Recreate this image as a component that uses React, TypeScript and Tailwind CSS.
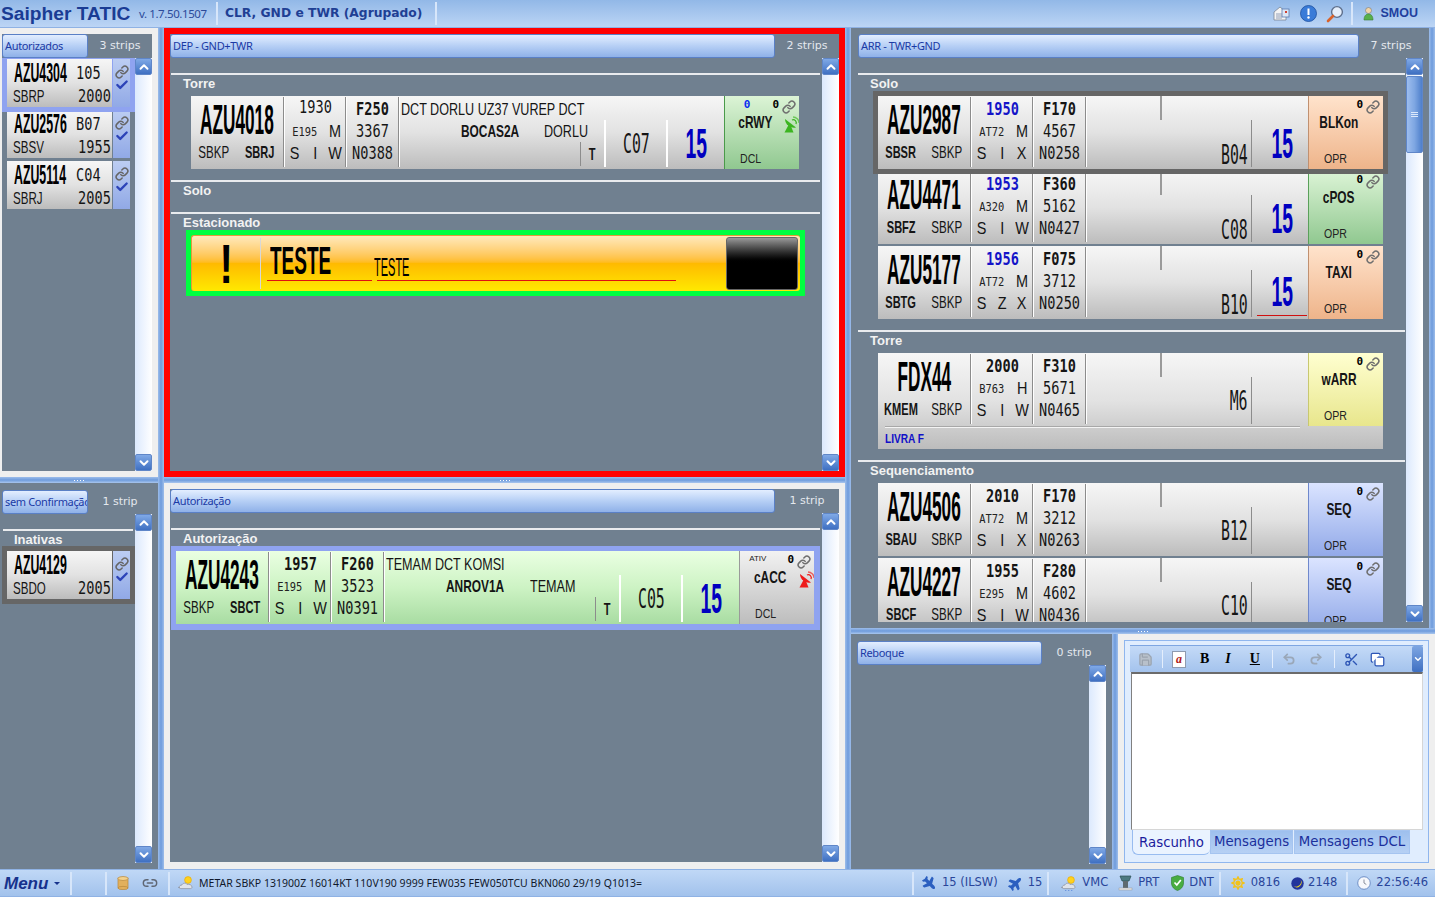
import React from 'react';
import { Link, Check, ChevronUp, ChevronDown, Scissors, Undo2, Redo2, Save, Copy, Link2 } from 'lucide-react';
import { FaPlane, FaSun } from 'react-icons/fa';

const callBig = "font-['Liberation_Sans'] font-bold text-[42px] scale-x-[0.41] text-black";
const callSmall = "font-['Liberation_Sans'] font-bold text-[28px] scale-x-[0.44] origin-left text-black";
const mono = "font-['DejaVu_Sans_Mono'] text-[17px] scale-x-[0.8] text-[#151515]";
const monoBold = "font-['DejaVu_Sans_Mono'] font-bold text-[17px] scale-x-[0.8] text-[#151515]";
const monoBlue = "font-['DejaVu_Sans_Mono'] font-bold text-[17px] scale-x-[0.8] text-[#1414c8]";
const monoSmall = "font-['DejaVu_Sans_Mono'] text-[13px] scale-x-[0.8] text-[#222]";
const letter = "font-['Liberation_Sans'] text-[17px] scale-x-[0.85] text-[#151515]";
const icao = "font-['Liberation_Sans'] text-[17px] scale-x-[0.68] text-[#151515]";
const icaoBold = "font-['Liberation_Sans'] font-bold text-[17px] scale-x-[0.65] text-[#151515]";
const route = "font-['Liberation_Sans'] text-[17px] scale-x-[0.74] origin-left text-[#151515]";
const routeBold = "font-['Liberation_Sans'] font-bold text-[17px] scale-x-[0.7] origin-left text-[#151515]";
const gateText = "font-['DejaVu_Sans_Mono'] text-[27px] scale-x-[0.55] text-[#151515]";
const rwyText = "font-['Liberation_Sans'] font-bold text-[42px] scale-x-[0.46] text-[#0000c0]";
const stripGray = 'bg-gradient-to-b from-[#f6f6f6] via-[#e2e2e2] to-[#bcbcbc]';

const T = ({ c, children }: { c: string; children: React.ReactNode }) => (
  <span className={'inline-block whitespace-nowrap leading-none ' + c}>{children}</span>
);

const VDiv = () => <div className="w-[2px] h-[70px] mt-[1px] shrink-0 border-l border-[#8c8c8c] bg-white" />;

const Dish = ({ c }: { c: string }) => (
  <svg width="16" height="17" viewBox="0 0 16 17" className={'absolute right-[-1px] top-[20px] ' + c}>
    <path d="M1 3a9 9 0 0 0 11 8.500L1 3z" fill="currentColor" />
    <path d="M5 8l-4.500 8.500h9L6.500 9z" fill="currentColor" />
    <path d="M9 1a6 6 0 0 1 6 6" fill="none" stroke="currentColor" strokeWidth="1.300" opacity=".65" />
    <path d="M8 4a3 3 0 0 1 4 4" fill="none" stroke="currentColor" strokeWidth="1.300" />
  </svg>
);

interface StripData {
  callsign: string;
  origin: string;
  dest: string;
  originBold?: boolean;
  destBold?: boolean;
  time: string;
  timeStyle: string;
  type: string;
  wake: string;
  sid: string[];
  fl: string;
  sq: string;
  spd: string;
  routeText?: string;
  sidName?: string;
  star?: string;
  gate: string;
  noRwy?: boolean;
  rwyLine?: boolean;
  status: string;
  statusBg: string;
  foot: string;
  blueZero?: boolean;
  ativ?: boolean;
  dish?: 'green' | 'red';
  bg?: string;
  note?: string;
  spacing?: string;
}

const Strip = ({ d }: { d: StripData }) => (
  <div className={'flex flex-col overflow-hidden ' + (d.bg ?? stripGray) + ' ' + (d.spacing ?? '')}>
    <div className="flex h-[73px] shrink-0">
      <div className="w-[92px] shrink-0 flex flex-col">
        <div className="h-[48px] flex items-center justify-center">
          <T c={callBig}>{d.callsign}</T>
        </div>
        <div className="grid grid-cols-2">
          <div className="flex justify-center"><T c={d.originBold ? icaoBold : icao}>{d.origin}</T></div>
          <div className="flex justify-center"><T c={d.destBold ? icaoBold : icao}>{d.dest}</T></div>
        </div>
      </div>
      <VDiv />
      <div className="w-[60px] shrink-0 flex flex-col">
        <div className={'h-[24px] flex items-center justify-center ' + (d.timeStyle === mono ? 'pb-[2px]' : 'pt-[2px]')}><T c={d.timeStyle}>{d.time}</T></div>
        <div className="h-[22px] grid grid-cols-[40px_20px] items-center">
          <div className="flex justify-center"><T c={monoSmall}>{d.type}</T></div>
          <div className="flex justify-center"><T c={letter}>{d.wake}</T></div>
        </div>
        <div className="h-[22px] grid grid-cols-3 items-center">
          {d.sid.map((s, i) => (
            <div key={i} className="flex justify-center"><T c={letter}>{s}</T></div>
          ))}
        </div>
      </div>
      <VDiv />
      <div className="w-[51px] shrink-0 flex flex-col items-center">
        <div className="h-[24px] pt-[2px] flex items-center"><T c={monoBold}>{d.fl}</T></div>
        <div className="h-[22px] flex items-center"><T c={mono}>{d.sq}</T></div>
        <div className="h-[22px] flex items-center"><T c={mono}>{d.spd}</T></div>
      </div>
      <VDiv />
      <div className="flex-1 min-w-0 flex">
        {d.routeText ? (
          <>
            <div className="flex-1 min-w-0 flex flex-col">
              <div className="h-[24px] pt-[2px] flex items-center pl-[1px]"><T c={route}>{d.routeText}</T></div>
              <div className="h-[22px] flex items-center pl-[61px]">
                <div className="w-[84px] flex"><T c={routeBold}>{d.sidName}</T></div>
                <T c={route}>{d.star}</T>
              </div>
              <div className="flex-1 flex justify-end pb-[3px]">
                <div className="w-[24px] border-l border-[#8c8c8c] flex items-center justify-center">
                  <T c={icaoBold}>T</T>
                </div>
              </div>
            </div>
            <div className="w-[62px] shrink-0 mt-[24px] mb-[2px] border-l-2 border-white flex items-center justify-center">
              <T c={gateText}>{d.gate}</T>
            </div>
            <div className="w-[58px] shrink-0 mt-[24px] mb-[2px] border-l-2 border-white flex items-center justify-center">
              <T c={rwyText}>15</T>
            </div>
          </>
        ) : (
          <>
            <div className={'flex-1 min-w-0 flex flex-col items-end pr-[3px] ' + (d.noRwy ? 'pb-[12px]' : 'pb-[1px]')}>
              <div className="w-[2px] h-[24px] bg-[#9a9a9a] self-start ml-[73px]" />
              <div className="mt-auto flex"><T c={gateText + ' origin-right'}>{d.gate}</T></div>
            </div>
            <div className="w-[57px] shrink-0 mt-[24px] mb-[2px] pl-[4px] border-l border-[#8c8c8c] flex flex-col items-center justify-center">
              {!d.noRwy && <T c={rwyText}>15</T>}
              {d.rwyLine && <div className="w-[50px] h-[1px] bg-[#d01010] mt-[2px]" />}
            </div>
          </>
        )}
      </div>
      <div className={'w-[75px] shrink-0 relative flex flex-col border-l ' + d.statusBg}>
        <div className="h-[16px] flex items-center justify-end pr-[3px] gap-[3px]">
          {d.blueZero && <span className="mr-[19px] text-[11px] leading-none font-bold font-['DejaVu_Sans_Mono'] text-[#0a2ff0]">0</span>}
          {d.ativ && <span className="mr-[18px] text-[8px] leading-none font-['Liberation_Sans'] text-[#222]">ATIV</span>}
          <span className="text-[11px] leading-none font-bold font-['DejaVu_Sans_Mono'] text-black">0</span>
          <Link size={14} strokeWidth={2.6} className="text-[#6f6f6f] mt-[5px]" />
        </div>
        <div className="h-[20px] w-[60px] flex items-center justify-center">
          <T c="font-['Liberation_Sans'] font-bold text-[17px] scale-x-[0.7] text-[#151515]">{d.status}</T>
        </div>
        <div className="mt-auto pb-[4px] pl-[15px] flex">
          <T c="font-['Liberation_Sans'] text-[12px] scale-x-[0.88] origin-left text-[#222]">{d.foot}</T>
        </div>
        {d.dish && <Dish c={d.dish === 'green' ? 'text-[#3cb521]' : 'text-[#ee1c1c]'} />}
      </div>
    </div>
    {d.note && (
      <div className="h-[23px] flex flex-col">
        <div className="ml-[7px] w-[415px] h-[2px] bg-[#f4f4f4] border-t border-[#a8a8a8]" />
        <div className="flex-1 flex items-center pl-[7px]">
          <T c="font-['Liberation_Sans'] font-bold text-[13px] scale-x-[0.78] origin-left text-[#1010c8]">{d.note}</T>
        </div>
      </div>
    )}
  </div>
);

const SmallStrip = ({ cs, right, from, time }: { cs: string; right?: string; from: string; time: string }) => (
  <div className="flex h-[48px] w-[123px]">
    <div className={'w-[105px] flex flex-col ' + stripGray}>
      <div className="h-[25px] grid grid-cols-[60px_42px] items-center">
        <div className="pl-[7px] flex"><T c={callSmall}>{cs}</T></div>
        <div className="flex justify-center">{right && <T c={mono}>{right}</T>}</div>
      </div>
      <div className="mt-[4px] grid grid-cols-[70px_35px] items-center">
        <div className="pl-[6px] flex"><T c={icao + ' origin-left'}>{from}</T></div>
        <div className="flex justify-center"><T c={mono}>{time}</T></div>
      </div>
    </div>
    <div className="ml-[1px] w-[17px] flex flex-col items-center pt-[6px] bg-gradient-to-b from-[#bccdf2] to-[#91a9e6]">
      <Link size={14} strokeWidth={2.6} className="text-[#666]" />
      <Check size={14} strokeWidth={4} className="text-[#2c43b8] -mt-[1px]" />
    </div>
  </div>
);

const ScrollBtn = ({ down }: { down?: boolean }) => (
  <div className="h-[17px] shrink-0 flex items-center justify-center rounded-[2px] border border-[#5f86c8] bg-gradient-to-b from-[#80a9e6] to-[#3f70c2]">
    {down ? <ChevronDown size={14} strokeWidth={3.4} className="text-white" /> : <ChevronUp size={14} strokeWidth={3.4} className="text-white" />}
  </div>
);

const Scrollbar = ({ thumb }: { thumb?: boolean }) => (
  <div className="w-[17px] shrink-0 flex flex-col bg-gradient-to-r from-[#dce9fd] to-white">
    <ScrollBtn />
    {thumb && (
      <div className="mt-[1px] h-[77px] rounded-[2px] border border-[#5f86c8] bg-gradient-to-r from-[#9dbdee] via-[#7ea6e2] to-[#4e7fcb] flex items-center justify-center">
        <div className="w-[7px] h-[5px] border-y border-[#dce8fb] flex items-center"><div className="w-full h-[1px] bg-[#dce8fb]" /></div>
      </div>
    )}
    <div className="flex-1" />
    <ScrollBtn down />
  </div>
);

const Header = ({ title, count, w }: { title: string; count: string; w: string }) => (
  <div className="flex h-[24px] shrink-0">
    <div className={"rounded-[3px] border border-[#5a80c6] bg-gradient-to-b from-[#e3eeff] via-[#b6cff5] to-[#8fb1e8] flex items-center pl-[2px] overflow-hidden " + w}>
      <span className="font-['Noto_Sans'] text-[11px] tracking-[-0.35px] whitespace-nowrap text-[#1b3aa5]">{title}</span>
    </div>
    <div className="w-[64px] shrink-0 pt-[1px] flex items-center justify-center font-['DejaVu_Sans'] text-[11px] text-[#e4e8ee]">{count}</div>
  </div>
);

const Section = ({ title, x, line, pad, children }: { title: string; x: string; line: string; pad?: string; children?: React.ReactNode }) => (
  <div className={pad ?? 'pb-[8px]'}>
    <div className={'h-[2px] bg-[#e9ebee] ' + line} />
    <div className={"h-[21px] pt-[1px] font-['Liberation_Sans'] font-bold text-[13px] leading-[16px] text-[#f2f2f2] " + x}>{title}</div>
    {children}
  </div>
);

const Grip = () => (
  <div className="flex gap-[2px]">
    <i className="w-[1px] h-[1px] bg-white" /><i className="w-[1px] h-[1px] bg-white" />
    <i className="w-[1px] h-[1px] bg-white" /><i className="w-[1px] h-[1px] bg-white" />
  </div>
);

const SplitV = () => (
  <div className="w-[6px] shrink-0 bg-gradient-to-r from-[#9dbdea] via-[#6e9bdc] to-[#9dbdea]" />
);
const SplitH = () => (
  <div className="h-[6px] shrink-0 bg-gradient-to-b from-[#9dbdea] via-[#6e9bdc] to-[#a9c6ee] flex items-center justify-center"><Grip /></div>
);

const Sep = ({ ml, mr }: { ml?: string; mr?: string }) => (
  <div className={'w-[2px] h-[23px] shrink-0 bg-[#d7e6fa] ' + (ml ?? '') + ' ' + (mr ?? '')} />
);

const stText = "font-['DejaVu_Sans'] text-[11.5px] whitespace-nowrap text-[#29459a]";

const CloudIcon = ({ rain }: { rain?: boolean }) => (
  <svg width="16" height="16" viewBox="0 0 16 16">
    <circle cx="10" cy="5" r="3.400" fill="#ffd21e" stroke="#e8a400" strokeWidth=".6" />
    <path d="M1 13c0-2 1.400-3 3-3 .5-2 3.800-2.600 5-.6 2-.5 5 .6 5 2.600 0 1-.6 1.600-1.600 1.600H3c-1.200 0-2-.4-2-1.600z" fill="#dfe3ea" stroke="#8a8f9c" strokeWidth=".7" />
    {rain && <path d="M5 15l-.5 1M8 15l-.5 1M11 15l-.5 1" stroke="#5a86d8" strokeWidth="1" />}
  </svg>
);

const Editor = () => (
  <div className="flex-1 bg-[#efefef] pt-[6px] pl-[6px] pr-[6px] pb-[6px]">
    <div className="h-full border border-[#8fb6ee] bg-[#e0edfe] pt-[4px] px-[5px] flex flex-col">
      <div className="h-[27px] shrink-0 flex items-center border-t border-[#7ea6e2] bg-gradient-to-b from-[#c4daf7] to-[#a4c3ed] pl-[8px]">
        <Save size={15} className="text-[#9aa3ae]" fill="#b8c0ca" />
        <div className="w-[1px] h-[18px] bg-[#e4eefc] ml-[9px] mr-[9px]" />
        <div className="w-[14px] h-[17px] bg-white border border-[#8e9bb0] flex items-center justify-center text-[12px] leading-none italic font-bold font-['Liberation_Serif'] text-[#b01818]">a</div>
        <span className="ml-[14px] text-[14px] leading-none font-bold font-['Liberation_Serif'] text-black">B</span>
        <span className="ml-[16px] text-[14px] leading-none font-bold italic font-['Liberation_Serif'] text-black">I</span>
        <span className="ml-[19px] text-[14px] leading-none font-bold underline font-['Liberation_Serif'] text-black">U</span>
        <div className="w-[1px] h-[18px] bg-[#e4eefc] ml-[12px] mr-[9px]" />
        <Undo2 size={14} strokeWidth={3} className="text-[#9aa7b8]" />
        <Redo2 size={14} strokeWidth={3} className="text-[#9aa7b8] ml-[13px]" />
        <div className="w-[1px] h-[18px] bg-[#e4eefc] ml-[11px] mr-[9px]" />
        <Scissors size={15} strokeWidth={2.2} className="text-[#2d55b5]" />
        <Copy size={15} strokeWidth={2} className="text-[#2d55b5] ml-[11px]" fill="#fff" />
        <div className="ml-auto w-[11px] h-[26px] rounded-[2px] bg-gradient-to-b from-[#7ea6e2] to-[#3f70c2] flex items-center justify-center">
          <ChevronDown size={10} strokeWidth={3.4} className="text-white" />
        </div>
      </div>
      <div className="h-[158px] shrink-0 ml-[1px] bg-white border-t-2 border-t-[#6b6b6b] border-l border-l-[#808080] border-r border-r-[#d6d6d6] border-b border-b-[#d6d6d6]" />
      <div className="flex h-[25px] shrink-0 pl-[2px] font-['DejaVu_Sans'] text-[13.300px] text-[#1b2f9c]">
        <div className="w-[78px] pt-[2px] rounded-b-[6px] border-l border-b border-[#98bcf0] bg-[#eaf3ff] flex items-center justify-center">
          <span className="text-[#1b1b9c]">Rascunho</span>
        </div>
        <div className="w-[83px] h-[24px] border border-[#a5c4f0] bg-gradient-to-b from-[#9ec0ee] to-[#b6d0f4] flex items-center justify-center">Mensagens</div>
        <div className="w-[116px] ml-[1px] h-[24px] border border-[#a5c4f0] bg-gradient-to-b from-[#9ec0ee] to-[#b6d0f4] flex items-center justify-center">Mensagens DCL</div>
      </div>
    </div>
  </div>
);

const TopBar = () => (
  <div className="h-[28px] shrink-0 flex items-center border-b border-[#8fb2e4] bg-gradient-to-b from-[#92b8e7] to-[#bcd5f5]">
    <span className="ml-[1px] w-[129px] font-['Liberation_Sans'] font-bold text-[19.200px] leading-none whitespace-nowrap text-[#1a3c94]">Saipher TATIC</span>
    <span className="ml-[9px] w-[69px] font-['Noto_Sans'] text-[11.500px] tracking-[-0.4px] whitespace-nowrap text-[#2b4a9a]">v. 1.7.50.1507</span>
    <Sep ml="ml-[8px]" mr="mr-[7px]" />
    <span className="w-[202px] font-['DejaVu_Sans'] font-bold text-[12.300px] whitespace-nowrap text-[#1f3f94]">CLR, GND e TWR (Agrupado)</span>
    <Sep ml="ml-[8px]" />
    <div className="ml-auto flex items-center">
      <svg width="17" height="15" viewBox="0 0 17 15">
        <path d="M1 6l6-5 6 5v8H1z" fill="#f4f4f4" stroke="#7c8796" strokeWidth=".8" />
        <rect x="9" y="3" width="7" height="8" fill="#dbe6f5" stroke="#5a7ab0" strokeWidth=".8" />
        <path d="M3 8h6M3 10h6M3 12h6" stroke="#7b8ca8" strokeWidth=".8" />
        <rect x="12" y="5" width="2" height="2" fill="#d04030" />
      </svg>
      <svg className="ml-[10px]" width="17" height="17" viewBox="0 0 17 17">
        <circle cx="8.500" cy="8.500" r="8" fill="#3a7bd8" stroke="#1d4f9e" strokeWidth=".8" />
        <rect x="7.500" y="3.500" width="2" height="6.500" fill="#fff" />
        <circle cx="8.500" cy="12.500" r="1.200" fill="#fff" />
      </svg>
      <svg className="ml-[9px]" width="18" height="18" viewBox="0 0 18 18">
        <circle cx="11" cy="7" r="5.400" fill="#e4eefb" stroke="#5d6f8c" strokeWidth="1.400" />
        <path d="M7 11l-5 5" stroke="#d9622a" strokeWidth="2.600" strokeLinecap="round" />
      </svg>
      <Sep ml="ml-[7px]" />
      <svg className="ml-[10px]" width="11" height="14" viewBox="0 0 11 14">
        <circle cx="5.500" cy="3.500" r="3" fill="#f2d5a8" stroke="#777" strokeWidth=".6" />
        <path d="M1 13c0-4 2-6 4.500-6S10 9 10 13z" fill="#58b04a" stroke="#3b7c32" strokeWidth=".6" />
      </svg>
      <span className="ml-[7px] mr-[17px] font-['Liberation_Sans'] font-bold text-[12.500px] text-[#1f3f9e]">SMOU</span>
    </div>
  </div>
);

const StatusBar = () => (
  <div className="h-[28px] shrink-0 flex items-center border-t border-[#8fb2e4] border-b bg-gradient-to-b from-[#c0d8f6] to-[#a2c2ec]">
    <span className="ml-[4px] w-[44px] font-['Liberation_Sans'] font-bold italic text-[17px] leading-none text-[#17328c]">Menu</span>
    <div className="ml-[6px] w-0 h-0 border-x-[3px] border-x-transparent border-t-[3px] border-t-[#17328c]" />
    <Sep ml="ml-[10px]" />
    <Sep ml="ml-[33px]" />
    <svg className="ml-[10px]" width="12" height="14" viewBox="0 0 12 14">
      <rect x="1" y="2" width="10" height="10" fill="#e2b05c" stroke="#b8863a" strokeWidth=".7" />
      <ellipse cx="6" cy="2.500" rx="5" ry="2" fill="#f3d28e" stroke="#b8863a" strokeWidth=".7" />
      <ellipse cx="6" cy="12" rx="5" ry="1.600" fill="#e2b05c" stroke="#b8863a" strokeWidth=".7" />
    </svg>
    <Link2 size={16} strokeWidth={2.2} className="ml-[13px] text-[#5f6673]" />
    <Sep ml="ml-[10px]" mr="mr-[8px]" />
    <CloudIcon />
    <span className="ml-[5px] pt-[1px] font-['Noto_Sans'] text-[10.500px] tracking-[0.03px] whitespace-nowrap text-[#10182c]">METAR SBKP 131900Z 16014KT 110V190 9999 FEW035 FEW050TCU BKN060 29/19 Q1013=</span>
    <div className="ml-auto flex items-center">
      <Sep mr="mr-[8px]" />
      <FaPlane size={15} className="text-[#2b5fc0] rotate-[45deg]" />
      <span className={stText + ' ml-[5px]'}>15 (ILSW)</span>
      <FaPlane size={15} className="ml-[10px] text-[#2b5fc0] -rotate-[45deg]" />
      <span className={stText + ' ml-[5px]'}>15</span>
      <Sep ml="ml-[5px]" mr="mr-[12px]" />
      <CloudIcon rain />
      <span className={stText + ' ml-[5px]'}>VMC</span>
      <svg className="ml-[10px]" width="15" height="16" viewBox="0 0 15 16">
        <path d="M2 1h11l-2 5H4z" fill="#4d7a80" stroke="#2b4f55" strokeWidth=".7" />
        <rect x="5" y="6" width="5" height="7" fill="#5e6a70" />
        <rect x="1" y="13" width="13" height="2" fill="#e8e8e8" stroke="#999" strokeWidth=".5" />
      </svg>
      <span className={stText + ' ml-[5px]'}>PRT</span>
      <svg className="ml-[12px]" width="13" height="16" viewBox="0 0 13 16">
        <path d="M6.500 0.500L12.500 2.500V8c0 4-3 6.500-6 7.500C3.500 14.500.5 12 .5 8V2.500z" fill="#49ad42" stroke="#2c7a2b" strokeWidth=".6" />
        <path d="M3.500 7.500l2.300 2.500 4-5" fill="none" stroke="#fff" strokeWidth="1.700" />
      </svg>
      <span className={stText + ' ml-[5px]'}>DNT</span>
      <Sep ml="ml-[5px]" mr="mr-[10px]" />
      <FaSun size={14} className="text-[#f2c21a]" />
      <span className={stText + ' ml-[6px]'}>0816</span>
      <svg className="ml-[11px]" width="13" height="13" viewBox="0 0 13 13">
        <circle cx="6.500" cy="6.500" r="6.200" fill="#22349c" />
        <path d="M9.500 2.500A4.800 4.800 0 0 1 2.500 9a5 5 0 0 0 7-6.500z" fill="#f6d91e" />
      </svg>
      <span className={stText + ' ml-[4px]'}>2148</span>
      <Sep ml="ml-[9px]" mr="mr-[9px]" />
      <svg width="14" height="14" viewBox="0 0 14 14">
        <circle cx="7" cy="7" r="6.300" fill="#f6f8fc" stroke="#6e8fc6" strokeWidth="1" />
        <path d="M7 3.500V7l2.300 1.500" fill="none" stroke="#8a8f9c" strokeWidth="1" />
      </svg>
      <span className={stText + ' ml-[5px] mr-[7px]'}>22:56:46</span>
    </div>
  </div>
);

const strips: StripData[] = [
  { callsign: 'AZU2987', origin: 'SBSR', dest: 'SBKP', originBold: true, time: '1950', timeStyle: monoBlue, type: 'AT72', wake: 'M', sid: ['S', 'I', 'X'], fl: 'F170', sq: '4567', spd: 'N0258', gate: 'B04', status: 'BLKon', statusBg: 'border-[#c09070] bg-gradient-to-b from-[#ffe3cc] to-[#eeb48a]', foot: 'OPR', spacing: 'relative z-10 mb-[2px] outline-[5px] outline-[#666666]' },
  { callsign: 'AZU4471', origin: 'SBFZ', dest: 'SBKP', originBold: true, time: '1953', timeStyle: monoBlue, type: 'A320', wake: 'M', sid: ['S', 'I', 'W'], fl: 'F360', sq: '5162', spd: 'N0427', gate: 'C08', status: 'cPOS', statusBg: 'border-[#5aa05a] bg-gradient-to-b from-[#dcf4d6] to-[#90c890]', foot: 'OPR', spacing: 'mb-[2px]' },
  { callsign: 'AZU5177', origin: 'SBTG', dest: 'SBKP', originBold: true, time: '1956', timeStyle: monoBlue, type: 'AT72', wake: 'M', sid: ['S', 'Z', 'X'], fl: 'F075', sq: '3712', spd: 'N0250', gate: 'B10', rwyLine: true, status: 'TAXI', statusBg: 'border-[#c09070] bg-gradient-to-b from-[#ffe3cc] to-[#eeb48a]', foot: 'OPR', spacing: 'mb-[3px]' },
];

const fdx: StripData = { callsign: 'FDX44', origin: 'KMEM', dest: 'SBKP', originBold: true, time: '2000', timeStyle: monoBold, type: 'B763', wake: 'H', sid: ['S', 'I', 'W'], fl: 'F310', sq: '5671', spd: 'N0465', gate: 'M6', noRwy: true, status: 'wARR', statusBg: 'border-[#c8c870] bg-gradient-to-b from-[#ffffd0] to-[#e8e68c]', foot: 'OPR', note: 'LIVRA F', spacing: 'mb-[3px]' };

const seq: StripData[] = [
  { callsign: 'AZU4506', origin: 'SBAU', dest: 'SBKP', originBold: true, time: '2010', timeStyle: monoBold, type: 'AT72', wake: 'M', sid: ['S', 'I', 'X'], fl: 'F170', sq: '3212', spd: 'N0263', gate: 'B12', noRwy: true, status: 'SEQ', statusBg: 'border-[#6f88cc] bg-gradient-to-b from-[#dbe4ff] to-[#92a9e8]', foot: 'OPR', spacing: 'mb-[2px]' },
  { callsign: 'AZU4227', origin: 'SBCF', dest: 'SBKP', originBold: true, time: '1955', timeStyle: monoBold, type: 'E295', wake: 'M', sid: ['S', 'I', 'W'], fl: 'F280', sq: '4602', spd: 'N0436', gate: 'C10', noRwy: true, status: 'SEQ', statusBg: 'border-[#6f88cc] bg-gradient-to-b from-[#dbe4ff] to-[#92a9e8]', foot: 'OPR' },
];

const dep: StripData = { callsign: 'AZU4018', origin: 'SBKP', dest: 'SBRJ', destBold: true, time: '1930', timeStyle: mono, type: 'E195', wake: 'M', sid: ['S', 'I', 'W'], fl: 'F250', sq: '3367', spd: 'N0388', routeText: 'DCT DORLU UZ37 VUREP DCT', sidName: 'BOCAS2A', star: 'DORLU', gate: 'C07', status: 'cRWY', statusBg: 'border-[#4a9a4a] bg-gradient-to-b from-[#dcf4d6] to-[#90c890]', foot: 'DCL', blueZero: true, dish: 'green', spacing: 'mb-[3px]' };

const auth: StripData = { callsign: 'AZU4243', origin: 'SBKP', dest: 'SBCT', destBold: true, time: '1957', timeStyle: monoBold, type: 'E195', wake: 'M', sid: ['S', 'I', 'W'], fl: 'F260', sq: '3523', spd: 'N0391', routeText: 'TEMAM DCT KOMSI', sidName: 'ANROV1A', star: 'TEMAM', gate: 'C05', status: 'cACC', statusBg: 'border-[#9a9a9a] bg-gradient-to-b from-[#f2f2f2] to-[#bdbdbd]', foot: 'DCL', ativ: true, dish: 'red', bg: 'bg-gradient-to-b from-[#eaffe2] via-[#cdf3c4] to-[#a8dca2]' };

export default function App() {
  return (
    <div className="w-[1435px] h-[897px] flex flex-col overflow-hidden bg-[#efefef]">
      <TopBar />
      <div className="flex-1 min-h-0 flex">
        {/* coluna esquerda */}
        <div className="w-[158px] shrink-0 flex flex-col">
          <div className="h-[449px] shrink-0 pt-[6px] pl-[2px] pr-[6px] pb-[6px]">
            <div className="h-full bg-[#708090] flex flex-col">
              <Header title="Autorizados" count="3 strips" w="w-[86px]" />
              <div className="flex-1 min-h-0 flex">
                <div className="flex-1 min-w-0">
                  <div className="relative z-10 mb-[-2px] bg-[#8fa3f0] pt-[1px] px-[5px] pb-[5px]">
                    <SmallStrip cs="AZU4304" right="105" from="SBRP" time="2000" />
                  </div>
                  <div className="px-[5px] mb-[3px]">
                    <SmallStrip cs="AZU2576" right="B07" from="SBSV" time="1955" />
                  </div>
                  <div className="px-[5px]">
                    <SmallStrip cs="AZU5114" right="C04" from="SBRJ" time="2005" />
                  </div>
                </div>
                <Scrollbar />
              </div>
            </div>
          </div>
          <SplitH />
          <div className="flex-1 min-h-0 bg-[#708090] pt-[7px] pl-[2px] pr-[6px] pb-[6px] flex flex-col">
            <Header title="sem Confirmação" count="1 strip" w="w-[86px]" />
            <div className="flex-1 min-h-0 flex">
              <div className="flex-1 min-w-0 pt-[15px]">
                <div className="h-[2px] bg-[#e9ebee] ml-[1px] mr-[2px]" />
                <div className="h-[15px] pt-[1px] pl-[12px] font-['Liberation_Sans'] font-bold text-[13px] leading-[16px] text-[#f2f2f2]">Inativas</div>
                <div className="bg-[#666666] px-[5px] py-[5px]">
                  <SmallStrip cs="AZU4129" from="SBDO" time="2005" />
                </div>
              </div>
              <Scrollbar />
            </div>
          </div>
        </div>
        <SplitV />
        {/* coluna central */}
        <div className="w-[681px] shrink-0 flex flex-col">
          <div className="h-[449px] shrink-0 border-[6px] border-[#ff0000] bg-[#708090] flex flex-col">
            <Header title="DEP - GND+TWR" count="2 strips" w="w-[605px]" />
            <div className="flex-1 min-h-0 flex">
              <div className="flex-1 min-w-0 pt-[15px] overflow-hidden">
                <Section title="Torre" x="pl-[13px]" line="ml-[1px] mr-[2px]">
                  <div className="ml-[21px] mr-[23px]"><Strip d={dep} /></div>
                </Section>
                <Section title="Solo" x="pl-[13px]" line="ml-[1px] mr-[2px]" pad="pb-[9px]" />
                <Section title="Estacionado" x="pl-[13px]" line="ml-[1px] mr-[2px]">
                  <div className="-mt-[5px] ml-[16px] mr-[17px] bg-[#00ff40] p-[5px]">
                    <div className="h-[56px] flex rounded-[3px] border-t border-l border-[#e59a3a] bg-gradient-to-b from-[#ffe9bb] via-[#ffba00] to-[#ffe900]">
                      <div className="w-[69px] shrink-0 flex items-center justify-center border-r border-[#d8d8d8] my-[2px]">
                        <span className="font-['Liberation_Sans'] font-bold text-[56px] leading-none scale-x-[0.72] text-black">!</span>
                      </div>
                      <div className="flex-1 min-w-0 pl-[6px] flex flex-col">
                        <div className="flex items-end h-[44px]">
                          <div className="w-[107px] pl-[3px] flex"><T c="font-['Liberation_Sans'] font-bold text-[38px] scale-x-[0.5] origin-left text-black">TESTE</T></div>
                          <div className="pt-[8px] flex"><T c="font-['Liberation_Sans'] text-[25px] scale-x-[0.44] origin-left text-black">TESTE</T></div>
                        </div>
                        <div className="flex">
                          <div className="w-[105px] h-[1px] bg-[#e01010]" />
                          <div className="ml-[5px] w-[299px] h-[1px] bg-[#e01010]" />
                        </div>
                      </div>
                      <div className="w-[72px] shrink-0 my-[1px] mr-[2px] rounded-[3px] border border-[#666] bg-gradient-to-b from-[#9a9a9a] via-[#000000] to-[#000000]" />
                    </div>
                  </div>
                </Section>
              </div>
              <Scrollbar />
            </div>
          </div>
          <SplitH />
          <div className="flex-1 min-h-0 pt-[6px] px-[6px] pb-[7px]">
            <div className="h-full bg-[#708090] flex flex-col">
              <Header title="Autorização" count="1 strip" w="w-[605px]" />
              <div className="flex-1 min-h-0 flex">
                <div className="flex-1 min-w-0 pt-[15px] overflow-hidden">
                  <Section title="Autorização" x="pl-[13px]" line="ml-[1px] mr-[2px]">
                    <div className="-mt-[5px] ml-[1px] mr-[2px] bg-[#8fa3f0] pt-[5px] pb-[6px] pl-[5px] pr-[6px]"><Strip d={auth} /></div>
                  </Section>
                </div>
                <Scrollbar />
              </div>
            </div>
          </div>
        </div>
        <SplitV />
        {/* coluna direita */}
        <div className="flex-1 min-w-0 flex flex-col">
          <div className="h-[600px] shrink-0 flex">
            <div className="flex-1 min-w-0 bg-[#708090] pt-[6px] pl-[7px] pr-[6px] pb-[6px] flex flex-col">
              <Header title="ARR - TWR+GND" count="7 strips" w="w-[501px]" />
              <div className="flex-1 min-h-0 flex">
                <div className="flex-1 min-w-0 pt-[15px] overflow-hidden">
                  <Section title="Solo" x="pl-[12px]" line="mr-[1px]">
                    <div className="ml-[20px] mr-[23px]">
                      {strips.map(s => <Strip key={s.callsign} d={s} />)}
                    </div>
                  </Section>
                  <Section title="Torre" x="pl-[12px]" line="mr-[1px]">
                    <div className="ml-[20px] mr-[23px]"><Strip d={fdx} /></div>
                  </Section>
                  <Section title="Sequenciamento" x="pl-[12px]" line="mr-[1px]">
                    <div className="ml-[20px] mr-[23px]">
                      {seq.map(s => <Strip key={s.callsign} d={s} />)}
                    </div>
                  </Section>
                </div>
                <Scrollbar thumb />
              </div>
            </div>
            <SplitV />
          </div>
          <SplitH />
          <div className="flex-1 min-h-0 flex">
            <div className="w-[261px] shrink-0 bg-[#708090] pt-[7px] pl-[6px] pr-[6px] pb-[5px] flex flex-col">
              <Header title="Reboque" count="0 strip" w="w-[185px]" />
              <div className="flex-1 min-h-0 flex">
                <div className="flex-1" />
                <Scrollbar />
              </div>
            </div>
            <SplitV />
            <Editor />
          </div>
        </div>
      </div>
      <StatusBar />
    </div>
  );
}
